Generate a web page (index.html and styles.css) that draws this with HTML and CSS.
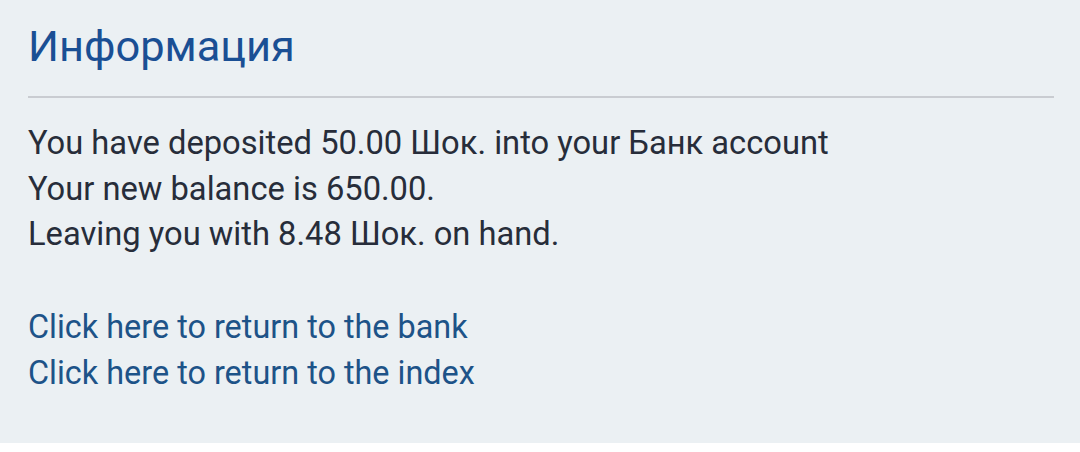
FILE: index.html
```html
<!DOCTYPE html>
<html lang="ru">
<head>
<meta charset="utf-8">
<title>Информация</title>
<link rel="stylesheet" href="styles.css">
</head>
<body>
<div class="panel">
  <h1 class="title">Информация</h1>
  <div class="content">
    <div class="message">
      You have deposited 50.00 Шок. into your Банк account<br>
      Your new balance is 650.00.<br>
      Leaving you with 8.48 Шок. on hand.
    </div>
    <div class="links">
      <a class="link" href="#">Click here to return to the bank</a><br>
      <a class="link" href="#">Click here to return to the index</a>
    </div>
  </div>
</div>
</body>
</html>
```

FILE: styles.css
```css
html, body {
  margin: 0;
  padding: 0;
  background: #ffffff;
}
body {
  font-family: Roboto, "Noto Sans", sans-serif;
}
.panel {
  background: #ebf0f3;
  padding: 21px 26px 46px 28px;
}
.title {
  margin: 0;
  font-size: 43.4px;
  line-height: 52px;
  font-weight: 400;
  color: #1a4f94;
  padding-bottom: 23px;
  border-bottom: 2px solid #c9ccd1;
}
.content {
  padding-top: 23px;
  font-size: 32.7px;
  line-height: 45.6px;
  color: #272d3a;
}
.links {
  margin-top: 47.6px;
}
.link {
  font-size: 32.4px;
  color: #1d5388;
  text-decoration: none;
}
```
